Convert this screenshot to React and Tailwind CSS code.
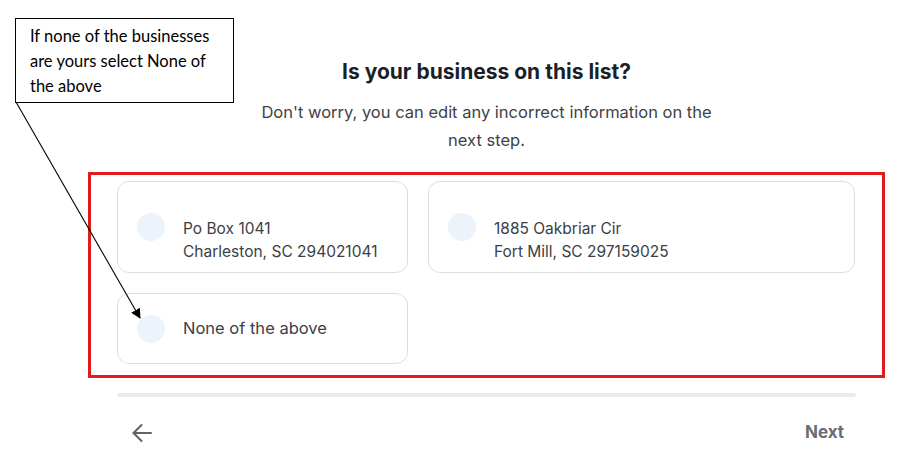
import { useState } from 'react';

const businesses = [
  { id: 'a', line1: 'Po Box 1041', line2: 'Charleston, SC 294021041' },
  { id: 'b', line1: '1885 Oakbriar Cir', line2: 'Fort Mill, SC 297159025' },
];

function Radio() {
  return <span className="w-[28px] h-[28px] shrink-0 rounded-full bg-[#edf3fb]" />;
}

function OptionCard({ children, tall }) {
  return (
    <button
      className={`flex items-center gap-[18px] pl-[19px] pr-4 text-left rounded-[12px] border border-[#dedede] bg-white ${
        tall ? 'h-[92px]' : 'h-[71px]'
      }`}
    >
      <Radio />
      <div
        className={`leading-[23px] text-[#3c4043] ${tall ? 'pt-[25px] text-[15.5px]' : 'text-[16.5px]'}`}
      >
        {children}
      </div>
    </button>
  );
}

export default function App() {
  const [step] = useState(1);

  return (
    <main
      className="relative w-[920px] h-[468px] bg-white overflow-hidden"
      style={{ fontFamily: 'Inter, "Noto Sans", sans-serif' }}
    >
      {/* business picker */}
      <div className="ml-[88px] w-[797px] pt-[57px]">
        <h1 className="text-center text-[21px] leading-[30px] font-bold text-[#1b1f2a]">
          Is your business on this list?
        </h1>
        <p className="mt-[11px] mx-auto w-[470px] text-center text-[16.5px] leading-[28px] text-[#3f4246]">
          Don't worry, you can edit any incorrect information on the next step.
        </p>

        <section className="mt-[18px] border-[3px] border-[#e01b1b] pt-[6px] pb-[11px] pl-[26px]">
          <div className="grid grid-cols-[291px_427px] gap-x-[20px] gap-y-[20px]">
            {businesses.map((b) => (
              <OptionCard key={b.id} tall>
                <p>{b.line1}</p>
                <p>{b.line2}</p>
              </OptionCard>
            ))}
            <OptionCard>
              <p>None of the above</p>
            </OptionCard>
          </div>
        </section>

        <div className="mt-[15px] mx-[29px] h-[4px] rounded-full bg-[#ebebeb]" data-step={step} />

        <div className="mx-[29px] mt-[23px] flex items-center justify-between pl-[15px] pr-[12px]">
          <button className="text-[#5f6368]">
            <svg width="20" height="20" viewBox="0 0 20 20" fill="none" stroke="currentColor" strokeWidth="2" strokeLinecap="round" strokeLinejoin="round">
              <path d="M19 10H1.5" />
              <path d="M9.5 2 1.5 10l8 8" />
            </svg>
          </button>
          <button className="text-[17px] font-bold text-[#6b6e72]">Next</button>
        </div>
      </div>

      {/* annotation callout */}
      <div
        className="absolute left-[15px] top-[18px] w-[219px] h-[85px] border border-black bg-white pl-[14px] pt-[5px] text-[16.5px] leading-[25px] text-black"
        style={{ fontFamily: 'Lato, "Open Sans", sans-serif' }}
      >
        If none of the businesses
        <br />
        are yours select None of
        <br />
        the above
      </div>
      <svg className="absolute inset-0 pointer-events-none" width="920" height="468">
        <defs>
          <marker id="tip" markerWidth="10" markerHeight="10" refX="9" refY="5" orient="auto" markerUnits="userSpaceOnUse">
            <path d="M0 0 L10 5 L0 10 Z" fill="#000" />
          </marker>
        </defs>
        <line x1="16" y1="102" x2="140" y2="318" stroke="#000" strokeWidth="1.1" markerEnd="url(#tip)" />
      </svg>
    </main>
  );
}
